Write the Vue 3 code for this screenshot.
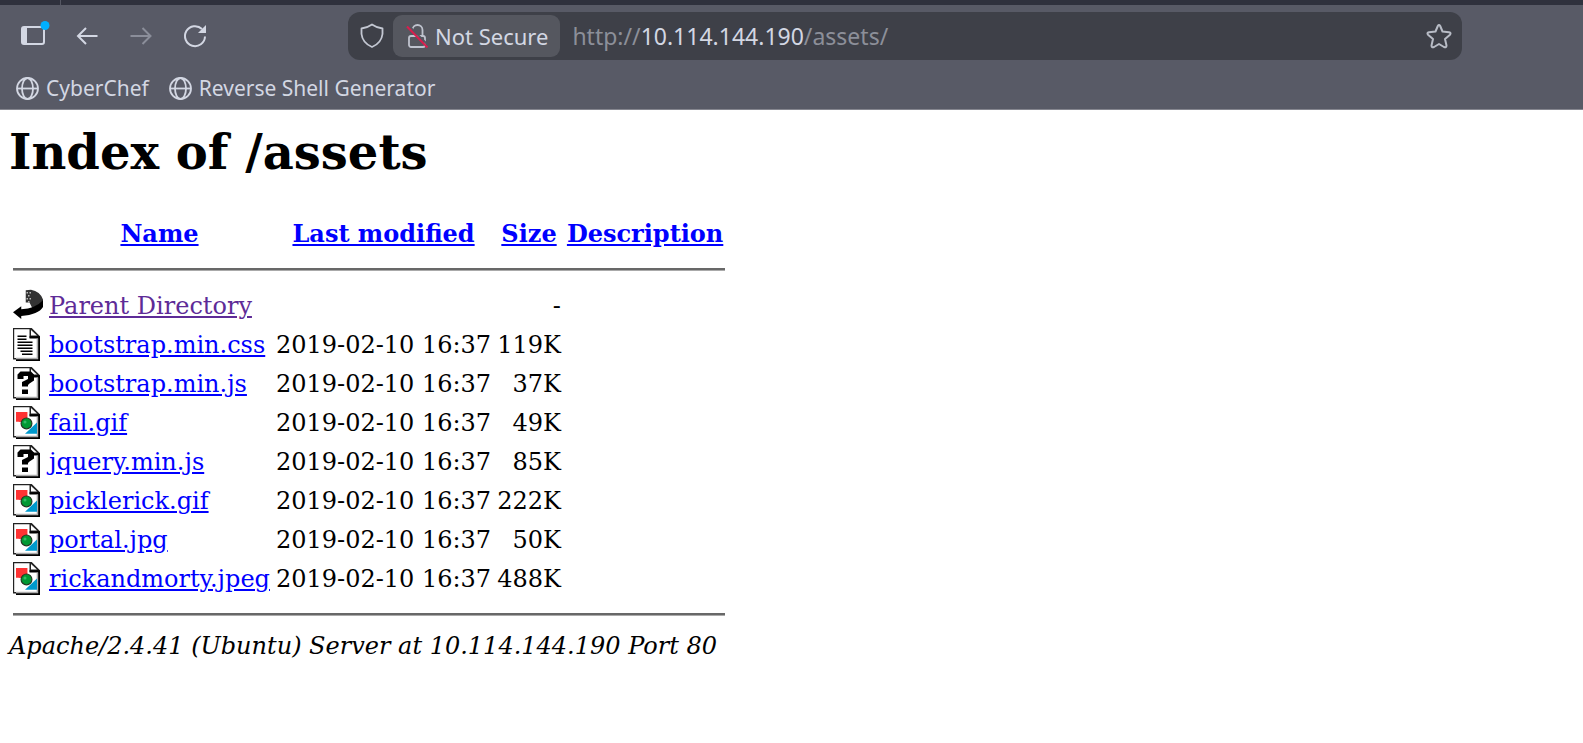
<script setup>
const bookmarks = ['CyberChef', 'Reverse Shell Generator']

const files = [
  { name: 'Parent Directory', icon: 'back', modified: '', size: '-', visited: true },
  { name: 'bootstrap.min.css', icon: 'text', modified: '2019-02-10 16:37', size: '119K' },
  { name: 'bootstrap.min.js', icon: 'unknown', modified: '2019-02-10 16:37', size: '37K' },
  { name: 'fail.gif', icon: 'image', modified: '2019-02-10 16:37', size: '49K' },
  { name: 'jquery.min.js', icon: 'unknown', modified: '2019-02-10 16:37', size: '85K' },
  { name: 'picklerick.gif', icon: 'image', modified: '2019-02-10 16:37', size: '222K' },
  { name: 'portal.jpg', icon: 'image', modified: '2019-02-10 16:37', size: '50K' },
  { name: 'rickandmorty.jpeg', icon: 'image', modified: '2019-02-10 16:37', size: '488K' },
]
</script>

<template>
  <header class="chrome">
    <div class="tabstrip"><span class="tab-edge"></span></div>

    <div class="toolbar">
      <nav class="controls" aria-label="Navigation">
        <button class="tool" type="button" aria-label="Sidebar">
          <svg width="32" height="30" viewBox="0 0 32 30">
            <rect x="4" y="6" width="22" height="17" rx="2" fill="none" stroke="#d3d7e3" stroke-width="2" />
            <path d="M4 6h5v17H4z" fill="#d3d7e3" />
            <circle cx="27" cy="4.5" r="4.5" fill="#00b0ff" />
          </svg>
        </button>
        <button class="tool" type="button" aria-label="Back">
          <svg width="30" height="30" viewBox="0 0 30 30">
            <path d="M25.500 15H6M14 7l-8 8 8 8" fill="none" stroke="#d3d7e3" stroke-width="2" />
          </svg>
        </button>
        <button class="tool" type="button" aria-label="Forward" disabled>
          <svg width="30" height="30" viewBox="0 0 30 30">
            <path d="M4.500 15h20M16.500 7l8 8-8 8" fill="none" stroke="#8b8e9a" stroke-width="2" />
          </svg>
        </button>
        <button class="tool" type="button" aria-label="Reload">
          <svg width="30" height="30" viewBox="0 0 30 30">
            <path d="M22 8a10 10 0 1 0 3 7.500" fill="none" stroke="#d3d7e3" stroke-width="2" />
            <path d="M26 4v8h-8z" fill="#d3d7e3" />
          </svg>
        </button>
      </nav>

      <div class="urlbar">
        <svg width="24" height="26" viewBox="0 0 24 26">
          <path d="M12 1.500Q17 5 22.500 5.500V11Q21.500 20 12 24Q2.500 20 1.500 11V5.500Q7 5 12 1.500z" fill="none" stroke="#c3c7d2" stroke-width="1.800" stroke-linejoin="round" />
        </svg>
        <button class="security" type="button">
          <svg width="24" height="28" viewBox="0 0 24 28">
            <rect x="4" y="14" width="16" height="11" rx="2" fill="none" stroke="#bfc3ce" stroke-width="1.800" />
            <path d="M7.500 8a5 5 0 0 1 10 0v6" fill="none" stroke="#bfc3ce" stroke-width="1.800" />
            <path d="M3 3l20 20" stroke="#55575f" stroke-width="2" />
            <path d="M2 4.500l20.500 21" stroke="#d81e4e" stroke-width="2" />
          </svg>
          <span>Not Secure</span>
        </button>
        <div class="address"><span>http://</span><strong>10.114.144.190</strong><span>/assets/</span></div>
        <button class="star" type="button" aria-label="Bookmark this page">
          <svg width="26" height="26" viewBox="0 0 26 26">
            <path d="M11.800 3Q13 1 14.200 3L16.500 8.500L23 9.300Q25.500 10 24 11.700L19 16L20.500 22.500Q20.500 25 18 24L13 21L8 24Q5.500 25 5.500 22.500L7 16L2 11.700Q.5 10 3 9.300L9.500 8.500z" fill="none" stroke="#b8bcc6" stroke-width="2" stroke-linejoin="round" />
          </svg>
        </button>
      </div>
    </div>

    <nav class="bookmarks" aria-label="Bookmarks">
      <a v-for="label in bookmarks" :key="label" href="#" class="bookmark">
        <svg width="24" height="24" viewBox="0 0 24 24" fill="none" stroke="#d3d7e3" stroke-width="1.800">
          <circle cx="11.500" cy="12.500" r="10.500" />
          <ellipse cx="11.500" cy="12.500" rx="5.500" ry="10.500" />
          <path d="M1 12.500h21" />
        </svg>
        <span>{{ label }}</span>
      </a>
    </nav>
  </header>

  <main class="page">
    <h1>Index of /assets</h1>
    <table>
      <thead>
        <tr>
          <th class="icon-cell"></th>
          <th><a href="#">Name</a></th>
          <th><a href="#">Last modified</a></th>
          <th><a href="#">Size</a></th>
          <th><a href="#">Description</a></th>
        </tr>
        <tr class="rule"><td colspan="5"><hr /></td></tr>
      </thead>
      <tbody>
        <tr v-for="file in files" :key="file.name">
          <td class="icon-cell">
            <svg v-if="file.icon === 'back'" width="30" height="33" viewBox="0 0 20 22">
              <path d="M8.500.8L12 .5Q18 1.500 20 7V11L13 13L11 9H8.500z" fill="#333" />
              <path d="M9 2h1v1H9zM10 4h1v1h-1zM9 6h1v1H9zM11 2h1v1h-1zM11 6h1v1h-1zM10 8h1v1h-1z" fill="#bbb" />
              <path d="M0 15.500L5.500 11.500V13.500Q15 13 20 7.500V12Q17 17 5.500 18V20z" fill="#000" />
            </svg>
            <svg v-else width="30" height="33" viewBox="0 0 20 22">
              <path d="M0 0h12.500l5.500 5.500V22H2v-1H0z" fill="#222" />
              <path d="M.8.800H11V6.500H16.500V20H.8z" fill="#fff" />
              <path d="M12 1.300L16 5H12z" fill="#fff" />
              <path d="M11 5.500h7V22H2v-1.200h14.800V7H11z" fill="#000" />
              <path d="M15.800 7h1v13.800H2v-1h13.800z" fill="#aaa" />
              <path v-if="file.icon === 'text'" d="M3 5.500h6M3 7.500h6M3 9.500h10M3 11.500h10M3 13.500h10M5 15.500h8M6 17.500h7" stroke="#000" stroke-width="1" />
              <path v-else-if="file.icon === 'unknown'" d="M5 3h7l2 2v4l-3 2-1 1v1H6v-3l4-2V6H7v2H3V5zM6 15h4v3H6z" fill="#000" />
              <g v-else>
                <path d="M2 4h7.500v6.500H4z" fill="#f33" />
                <path d="M2 4h7.500v6.500H2z" fill="#f33" />
                <path d="M16 11v7.500H8z" fill="#09c" />
                <circle cx="9" cy="11.600" r="3.600" fill="#093" stroke="#243a24" stroke-width=".8" />
                <circle cx="8" cy="10.600" r="1" fill="#3b6" />
              </g>
            </svg>
          </td>
          <td><a href="#" :class="{ visited: file.visited }">{{ file.name }}</a></td>
          <td class="num">{{ file.modified }}</td>
          <td class="num">{{ file.size }}</td>
          <td></td>
        </tr>
        <tr class="rule"><td colspan="5"><hr /></td></tr>
      </tbody>
    </table>
    <address>Apache/2.4.41 (Ubuntu) Server at 10.114.144.190 Port 80</address>
  </main>
</template>

<style>
body {
  background: #fff;
}
</style>

<style scoped>
.chrome {
  background: #585a66;
  color: #d3d7e3;
  font: 21px/28px "Noto Sans", sans-serif;
  border-bottom: 1px solid #85868f;
}
.tabstrip {
  display: flex;
  height: 5px;
  padding-left: 60px;
  background: #2f313d;
}
.tab-edge {
  width: 1px;
  background: #555763;
}
.toolbar {
  display: flex;
  align-items: center;
  padding: 7px 121px 7px 18px;
}
button {
  border: 0;
  padding: 0;
  background: none;
  color: inherit;
  font: inherit;
}
svg {
  display: block;
  flex: none;
}
.controls {
  display: flex;
  gap: 24px;
  width: 330px;
  flex: none;
}
.tool {
  width: 30px;
}
.urlbar {
  display: flex;
  flex: 1;
  align-items: center;
  height: 48px;
  box-sizing: border-box;
  padding: 0 10px 0 12px;
  border-radius: 12px;
  background: #3e4048;
}
.security {
  display: flex;
  align-items: center;
  gap: 6px;
  height: 42px;
  margin: 0 12px 0 9px;
  padding: 0 12px;
  border-radius: 9px;
  background: #55575f;
  font-size: 22px;
}
.address {
  flex: 1;
  font-size: 23px;
  color: #8c8f99;
}
.address strong {
  font-weight: 400;
  color: #d3d7e3;
}
.bookmarks {
  display: flex;
  gap: 20px;
  padding: 7px 16px;
}
.bookmark {
  display: flex;
  align-items: center;
  gap: 6px;
  color: inherit;
  text-decoration: none;
}
.page {
  padding: 14px 9px;
  font: 24px/28px "DejaVu Serif", serif;
  color: #000;
}
h1 {
  margin: 0 0 32px;
  font-size: 48px;
  line-height: 56px;
}
table {
  margin-left: 1px;
  border-spacing: 3px;
}
th,
td {
  height: 34px;
  padding: 2px 2px 0 1px;
  white-space: nowrap;
}
.icon-cell {
  width: 30px;
  padding: 1px 2px 1px 0;
}
.num {
  text-align: right;
}
.rule td {
  height: 28px;
  padding: 1px 0;
}
hr {
  height: 2px;
  margin: 0;
  border: 0;
  border-bottom: 1px solid #aaa;
  background: #686868;
}
.page a {
  color: #00f;
  text-decoration: underline;
}
.page a.visited {
  color: #5e2b97;
}
</style>
